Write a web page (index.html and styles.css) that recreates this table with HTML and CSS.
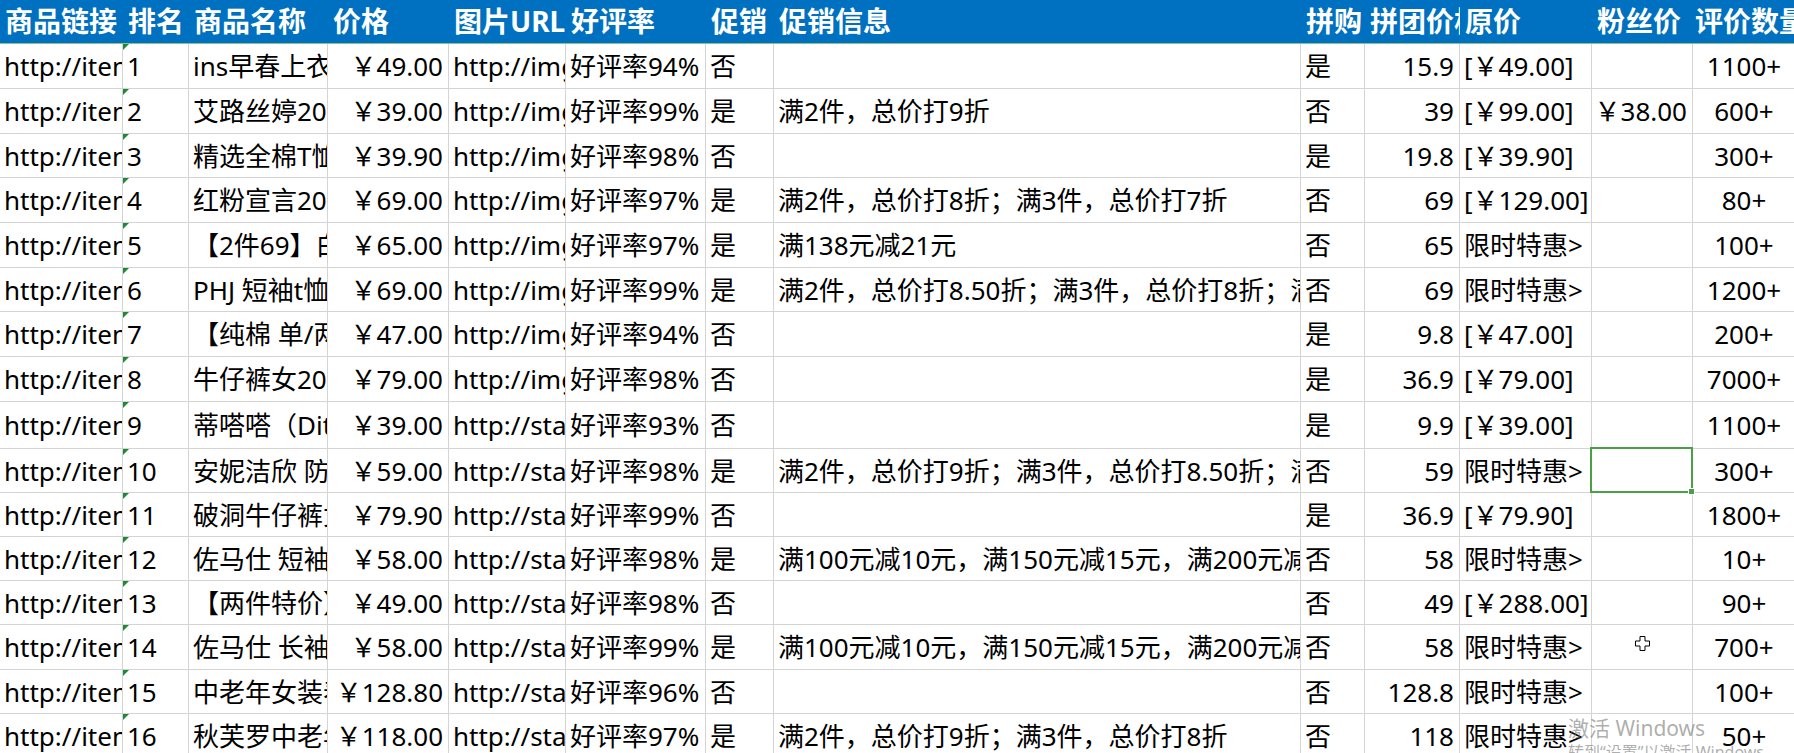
FILE: index.html
```html
<!DOCTYPE html>
<html lang="zh-CN">
<head>
<meta charset="utf-8">
<title>商品数据</title>
<link rel="stylesheet" href="styles.css">
</head>
<body>
<div class="sheet">
  <div class="h">商品链接</div><div class="h">排名</div><div class="h">商品名称</div><div class="h">价格</div><div class="h">图片URL</div><div class="h">好评率</div><div class="h">促销</div><div class="h">促销信息</div><div class="h">拼购</div><div class="h">拼团价格</div><div class="h">原价</div><div class="h">粉丝价</div><div class="h tight">评价数量</div>

  <div class="c">http://item.mogujie.com/detail/1m8x2a</div><div class="c rank">1</div><div class="c">ins早春上衣女2019新款</div><div class="c r">￥49.00</div><div class="c">http://img.mogucdn.com/p1.jpg</div><div class="c">好评率94%</div><div class="c">否</div><div class="c"></div><div class="c">是</div><div class="c r">15.9</div><div class="c">[￥49.00]</div><div class="c"></div><div class="c ctr">1100+</div>

  <div class="c">http://item.mogujie.com/detail/1m8x2b</div><div class="c rank">2</div><div class="c">艾路丝婷2019春装新款</div><div class="c r">￥39.00</div><div class="c">http://img.mogucdn.com/p2.jpg</div><div class="c">好评率99%</div><div class="c">是</div><div class="c">满2件，总价打9折</div><div class="c">否</div><div class="c r">39</div><div class="c">[￥99.00]</div><div class="c r">￥38.00</div><div class="c ctr">600+</div>

  <div class="c">http://item.mogujie.com/detail/1m8x2c</div><div class="c rank">3</div><div class="c">精选全棉T恤女短袖</div><div class="c r">￥39.90</div><div class="c">http://img.mogucdn.com/p3.jpg</div><div class="c">好评率98%</div><div class="c">否</div><div class="c"></div><div class="c">是</div><div class="c r">19.8</div><div class="c">[￥39.90]</div><div class="c"></div><div class="c ctr">300+</div>

  <div class="c">http://item.mogujie.com/detail/1m8x2d</div><div class="c rank">4</div><div class="c">红粉宣言2019新款</div><div class="c r">￥69.00</div><div class="c">http://img.mogucdn.com/p4.jpg</div><div class="c">好评率97%</div><div class="c">是</div><div class="c">满2件，总价打8折；满3件，总价打7折</div><div class="c">否</div><div class="c r">69</div><div class="c">[￥129.00]</div><div class="c"></div><div class="c ctr">80+</div>

  <div class="c">http://item.mogujie.com/detail/1m8x2e</div><div class="c rank">5</div><div class="c">【2件69】白色t恤女</div><div class="c r">￥65.00</div><div class="c">http://img.mogucdn.com/p5.jpg</div><div class="c">好评率97%</div><div class="c">是</div><div class="c">满138元减21元</div><div class="c">否</div><div class="c r">65</div><div class="c">限时特惠&gt;</div><div class="c"></div><div class="c ctr">100+</div>

  <div class="c">http://item.mogujie.com/detail/1m8x2f</div><div class="c rank">6</div><div class="c">PHJ 短袖t恤女宽松</div><div class="c r">￥69.00</div><div class="c">http://img.mogucdn.com/p6.jpg</div><div class="c">好评率99%</div><div class="c">是</div><div class="c">满2件，总价打8.50折；满3件，总价打8折；满4件，总价打7折</div><div class="c">否</div><div class="c r">69</div><div class="c">限时特惠&gt;</div><div class="c"></div><div class="c ctr">1200+</div>

  <div class="c">http://item.mogujie.com/detail/1m8x2g</div><div class="c rank">7</div><div class="c">【纯棉 单/两件装】</div><div class="c r">￥47.00</div><div class="c">http://img.mogucdn.com/p7.jpg</div><div class="c">好评率94%</div><div class="c">否</div><div class="c"></div><div class="c">是</div><div class="c r">9.8</div><div class="c">[￥47.00]</div><div class="c"></div><div class="c ctr">200+</div>

  <div class="c">http://item.mogujie.com/detail/1m8x2h</div><div class="c rank">8</div><div class="c">牛仔裤女2019新款</div><div class="c r">￥79.00</div><div class="c">http://img.mogucdn.com/p8.jpg</div><div class="c">好评率98%</div><div class="c">否</div><div class="c"></div><div class="c">是</div><div class="c r">36.9</div><div class="c">[￥79.00]</div><div class="c"></div><div class="c ctr">7000+</div>

  <div class="c">http://item.mogujie.com/detail/1m8x2i</div><div class="c rank">9</div><div class="c">蒂嗒嗒（Ditada）</div><div class="c r">￥39.00</div><div class="c">http://static.mogucdn.com/p9.jpg</div><div class="c">好评率93%</div><div class="c">否</div><div class="c"></div><div class="c">是</div><div class="c r">9.9</div><div class="c">[￥39.00]</div><div class="c"></div><div class="c ctr">1100+</div>

  <div class="c">http://item.mogujie.com/detail/1m8x2j</div><div class="c rank">10</div><div class="c">安妮洁欣 防晒衣</div><div class="c r">￥59.00</div><div class="c">http://static.mogucdn.com/p10.jpg</div><div class="c">好评率98%</div><div class="c">是</div><div class="c">满2件，总价打9折；满3件，总价打8.50折；满4件，总价打8折</div><div class="c">否</div><div class="c r">59</div><div class="c">限时特惠&gt;</div><div class="c sel"></div><div class="c ctr">300+</div>

  <div class="c">http://item.mogujie.com/detail/1m8x2k</div><div class="c rank">11</div><div class="c">破洞牛仔裤女</div><div class="c r">￥79.90</div><div class="c">http://static.mogucdn.com/p11.jpg</div><div class="c">好评率99%</div><div class="c">否</div><div class="c"></div><div class="c">是</div><div class="c r">36.9</div><div class="c">[￥79.90]</div><div class="c"></div><div class="c ctr">1800+</div>

  <div class="c">http://item.mogujie.com/detail/1m8x2l</div><div class="c rank">12</div><div class="c">佐马仕 短袖t恤</div><div class="c r">￥58.00</div><div class="c">http://static.mogucdn.com/p12.jpg</div><div class="c">好评率98%</div><div class="c">是</div><div class="c">满100元减10元，满150元减15元，满200元减20元</div><div class="c">否</div><div class="c r">58</div><div class="c">限时特惠&gt;</div><div class="c"></div><div class="c ctr">10+</div>

  <div class="c">http://item.mogujie.com/detail/1m8x2m</div><div class="c rank">13</div><div class="c">【两件特价】短袖</div><div class="c r">￥49.00</div><div class="c">http://static.mogucdn.com/p13.jpg</div><div class="c">好评率98%</div><div class="c">否</div><div class="c"></div><div class="c">否</div><div class="c r">49</div><div class="c">[￥288.00]</div><div class="c"></div><div class="c ctr">90+</div>

  <div class="c">http://item.mogujie.com/detail/1m8x2n</div><div class="c rank">14</div><div class="c">佐马仕 长袖t恤</div><div class="c r">￥58.00</div><div class="c">http://static.mogucdn.com/p14.jpg</div><div class="c">好评率99%</div><div class="c">是</div><div class="c">满100元减10元，满150元减15元，满200元减20元</div><div class="c">否</div><div class="c r">58</div><div class="c">限时特惠&gt;</div><div class="c cursor-cell"><svg class="cursor" width="15" height="15" viewBox="0 0 15 15"><path d="M5 0.5h5v4.5h4.5v5h-4.5v4.5h-5v-4.5h-4.5v-5h4.5z" fill="#fff" stroke="#000" stroke-width="1"/></svg></div><div class="c ctr">700+</div>

  <div class="c">http://item.mogujie.com/detail/1m8x2o</div><div class="c rank">15</div><div class="c">中老年女装春装</div><div class="c r">￥128.80</div><div class="c">http://static.mogucdn.com/p15.jpg</div><div class="c">好评率96%</div><div class="c">否</div><div class="c"></div><div class="c">否</div><div class="c r">128.8</div><div class="c">限时特惠&gt;</div><div class="c"></div><div class="c ctr">100+</div>

  <div class="c">http://item.mogujie.com/detail/1m8x2p</div><div class="c rank">16</div><div class="c">秋芙罗中老年女装</div><div class="c r">￥118.00</div><div class="c">http://static.mogucdn.com/p16.jpg</div><div class="c">好评率97%</div><div class="c">是</div><div class="c">满2件，总价打9折；满3件，总价打8折</div><div class="c">否</div><div class="c r">118</div><div class="c">限时特惠&gt;</div><div class="c"></div><div class="c ctr">50+</div>
</div>
<div class="watermark">
  <div class="wm1">激活 Windows</div>
  <div class="wm2">转到“设置”以激活 Windows。</div>
</div>
</body>
</html>
```

FILE: styles.css
```css
html, body {
  margin: 0;
  padding: 0;
  background: #ffffff;
  overflow: hidden;
}

body {
  font-family: "Noto Sans", "Noto Sans CJK SC", sans-serif;
  color: #000;
}

.sheet {
  display: grid;
  grid-template-columns: 123px 66px 139px 121px 117px 140px 68px 527px 64px 95px 132px 101px 104px;
  grid-template-rows: 44px 45px 45px 44px 45px 45px 44px 45px 45px 47px 44px 44px 44px 44px 45px 44px 45px;
  width: 1797px;
}

.h {
  background: #0070c0;
  color: #ffffff;
  font-weight: 700;
  font-size: 28px;
  line-height: 1.2;
  padding: 0 0 0 5px;
  white-space: nowrap;
  overflow: hidden;
  display: flex;
  align-items: center;
  border-bottom: 1px solid #8fbf8a;
  box-sizing: border-box;
}

.h.tight {
  padding-left: 2px;
}

.c {
  box-sizing: border-box;
  border-right: 1px solid #d4d4d4;
  border-bottom: 1px solid #d4d4d4;
  font-size: 26px;
  line-height: 1.2;
  padding: 2px 5px 0 4px;
  white-space: nowrap;
  overflow: hidden;
  display: flex;
  align-items: center;
  position: relative;
}

.c.r {
  justify-content: flex-end;
}

.c.ctr {
  justify-content: center;
}

.rank::before {
  content: "";
  position: absolute;
  left: 0;
  top: 0;
  width: 0;
  height: 0;
  border-top: 6px solid #1e8a36;
  border-right: 6px solid transparent;
}

.sel {
  overflow: visible;
  z-index: 2;
}

.sel::before {
  content: "";
  position: absolute;
  left: -2px;
  top: -2px;
  right: -1px;
  bottom: -1px;
  border: 2px solid #4aa046;
}

.sel::after {
  content: "";
  position: absolute;
  right: -3px;
  bottom: -3px;
  width: 5px;
  height: 5px;
  background: #4aa046;
  border: 1px solid #fff;
}

.cursor-cell {
  overflow: visible;
}

.cursor {
  position: absolute;
  left: 43px;
  top: 11px;
}

.watermark {
  position: absolute;
  left: 1568px;
  top: 715px;
  color: rgba(120, 120, 120, 0.6);
  font-family: "Noto Sans", "Noto Sans CJK SC", sans-serif;
  font-size: 21px;
  line-height: 26px;
  white-space: nowrap;
  pointer-events: none;
}

.wm2 {
  font-size: 16px;
  line-height: 22px;
}
```
